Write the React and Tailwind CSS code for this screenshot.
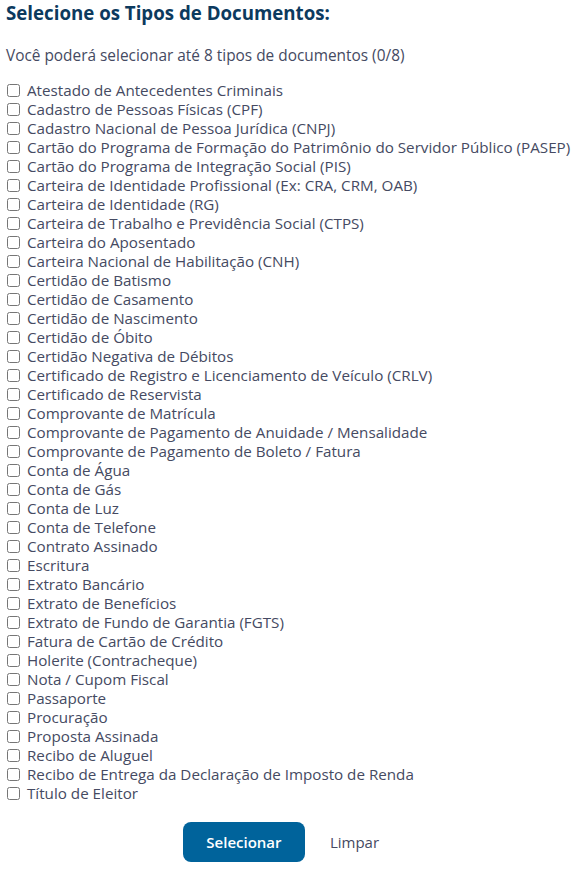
import React, { useState } from 'react';

const TIPOS = [
  'Atestado de Antecedentes Criminais',
  'Cadastro de Pessoas Físicas (CPF)',
  'Cadastro Nacional de Pessoa Jurídica (CNPJ)',
  'Cartão do Programa de Formação do Patrimônio do Servidor Público (PASEP)',
  'Cartão do Programa de Integração Social (PIS)',
  'Carteira de Identidade Profissional (Ex: CRA, CRM, OAB)',
  'Carteira de Identidade (RG)',
  'Carteira de Trabalho e Previdência Social (CTPS)',
  'Carteira do Aposentado',
  'Carteira Nacional de Habilitação (CNH)',
  'Certidão de Batismo',
  'Certidão de Casamento',
  'Certidão de Nascimento',
  'Certidão de Óbito',
  'Certidão Negativa de Débitos',
  'Certificado de Registro e Licenciamento de Veículo (CRLV)',
  'Certificado de Reservista',
  'Comprovante de Matrícula',
  'Comprovante de Pagamento de Anuidade / Mensalidade',
  'Comprovante de Pagamento de Boleto / Fatura',
  'Conta de Água',
  'Conta de Gás',
  'Conta de Luz',
  'Conta de Telefone',
  'Contrato Assinado',
  'Escritura',
  'Extrato Bancário',
  'Extrato de Benefícios',
  'Extrato de Fundo de Garantia (FGTS)',
  'Fatura de Cartão de Crédito',
  'Holerite (Contracheque)',
  'Nota / Cupom Fiscal',
  'Passaporte',
  'Procuração',
  'Proposta Assinada',
  'Recibo de Aluguel',
  'Recibo de Entrega da Declaração de Imposto de Renda',
  'Título de Eleitor',
];

const MAX = 8;

export default function App() {
  const [selected, setSelected] = useState([]);

  const toggle = (tipo) => {
    setSelected((prev) => {
      if (prev.includes(tipo)) return prev.filter((t) => t !== tipo);
      if (prev.length >= MAX) return prev;
      return [...prev, tipo];
    });
  };

  return (
    <div className="w-[586px] min-h-[873px] bg-white px-[6px] pt-0 text-[#454a62] font-['Open_Sans','DejaVu_Sans',sans-serif]">
      <h2 className="text-[18.7px] font-bold leading-[26px] text-[#0c3a5e]">Selecione os Tipos de Documentos:</h2>

      <p className="mt-[21px] text-[15.4px] leading-[18px]">
        Você poderá selecionar até 8 tipos de documentos ({selected.length}/{MAX})
      </p>

      <ul className="mt-[16px] flex flex-col">
        {TIPOS.map((tipo) => (
          <li key={tipo} className="flex items-center h-[19px]">
            <label className="flex items-center cursor-pointer text-[15.2px] leading-[19px] whitespace-nowrap">
              <input
                type="checkbox"
                className="w-[13px] h-[13px] m-0 ml-[1px] mr-[7px]"
                checked={selected.includes(tipo)}
                onChange={() => toggle(tipo)}
              />
              {tipo}
            </label>
          </li>
        ))}
      </ul>

      <div className="mt-[19px] flex items-center justify-center">
        <button className="h-[40px] w-[122px] rounded-[8px] bg-[#00639b] text-white text-[15px] font-semibold">
          Selecionar
        </button>
        <button className="ml-[25px] pr-[24px] text-[15px] text-[#454a62]">Limpar</button>
      </div>
    </div>
  );
}
